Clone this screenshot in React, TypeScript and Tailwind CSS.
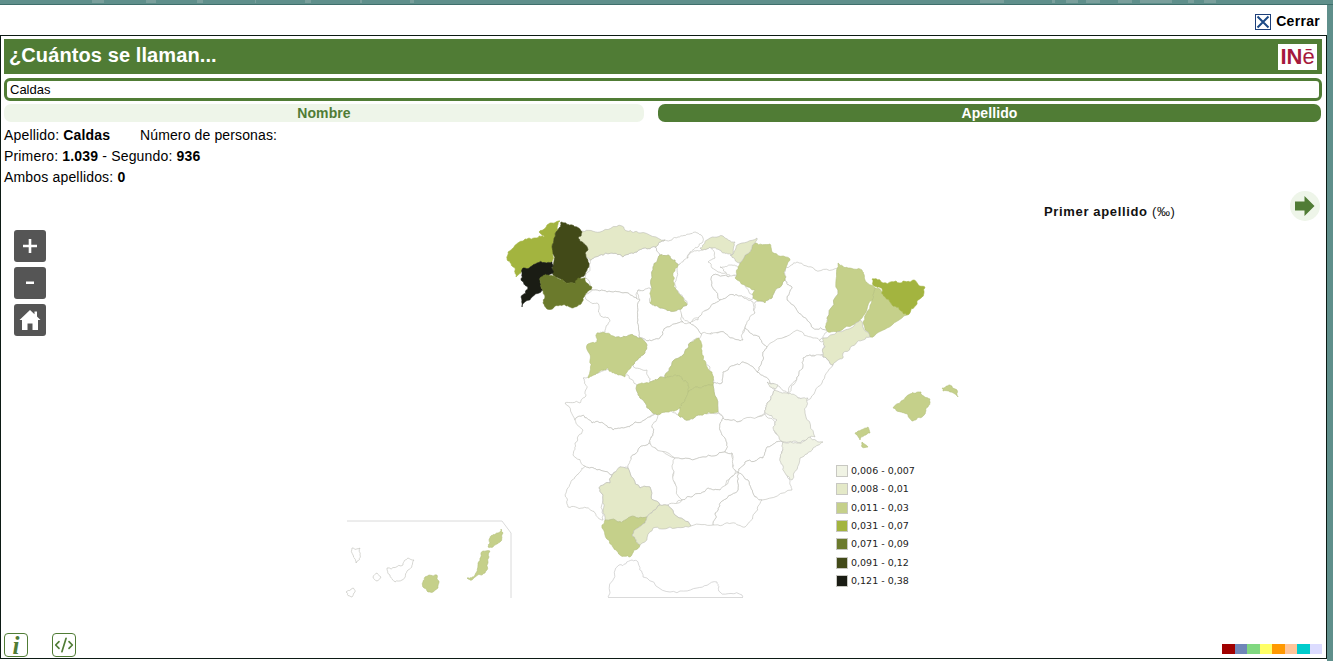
import React from "react";
import { CodeXml } from "lucide-react";

const C = { a: "#f0f3e4", b: "#e4e9c8", c: "#c5d08a", d: "#a3b43f", e: "#6b7a2c", f: "#424a18", g: "#1a1c14", w: "#ffffff" };

type P = [keyof typeof C, string];
const provinces: P[] = [
  ["w", "590,260 600,255 612,253 623,257 637,252 647,249 655,247 660,255 653,267 652,288 638,290 637,299 623,293 607,292 592,290 585,278 589,265"],
  ["w", "587,300 597,303 600,315 610,320 605,332 597,335 617,337 630,335 640,338 638,320 640,300 637,299 623,293 607,292 592,290 585,295"],
  ["w", "638,290 650,288 650,303 660,308 675,311 687,305 682,313 683,322 667,327 660,338 653,340 640,338 638,320 640,300"],
  ["w", "665,240 678,237 690,234 698,233 703,238 702,243 698,247 690,252 687,257 687,263 678,265 675,260 668,255 660,255 655,247"],
  ["w", "678,265 688,258 690,253 702,250 712,248 715,258 708,262 712,268 718,272 733,275 713,275 713,288 718,298 720,300 707,310 698,318 690,323 683,318 680,310 687,305 679,293 675,285 677,268"],
  ["w", "713,275 733,275 753,295 752,300 743,297 737,295 727,297 722,300 718,298 713,288"],
  ["w", "723,267 732,265 740,268 737,275 727,275 720,267"],
  ["w", "698,320 707,310 720,300 727,297 737,295 743,297 753,302 755,313 745,327 743,340 732,338 720,332 703,335 690,323"],
  ["w", "660,338 667,327 683,322 690,323 703,335 702,345 697,338 692,342 683,355 672,363 665,378 660,377 650,382 647,370 633,365 643,355 647,345 640,338 653,340"],
  ["w", "743,340 745,328 755,335 767,347 763,352 763,360 757,372 743,362 735,365 723,372 722,383 713,383 710,367 700,358 702,333 720,332 732,338"],
  ["w", "723,372 735,365 743,362 757,372 770,383 775,390 767,403 765,413 737,422 723,418 718,412 713,385 713,383 722,383"],
  ["w", "785,268 797,262 815,270 838,268 838,290 827,318 828,330 813,328 803,317 787,300 792,287 785,280"],
  ["w", "755,302 763,302 772,298 785,280 792,287 787,300 803,317 813,328 828,330 823,338 817,342 797,332 767,347 755,335 745,328 755,313"],
  ["w", "767,347 797,330 813,338 825,342 823,355 810,355 803,358 803,367 797,377 788,393 780,387 770,383 757,372 763,360 763,352"],
  ["w", "823,357 833,365 822,383 808,400 798,398 788,395 797,377 803,367 803,358 810,355 822,355"],
  ["w", "583,378 588,377 610,369 623,376 628,375 637,385 640,398 650,410 657,415 650,417 635,422 627,427 613,430 603,423 592,423 583,415 575,420 565,403 580,403 585,397 587,388"],
  ["w", "575,420 583,415 592,423 603,423 613,430 627,427 635,422 650,417 660,413 658,422 652,427 653,435 649,443 640,447 631,457 633,465 628,467 620,467 612,475 597,470 585,466 573,455 575,443 583,430"],
  ["w", "585,466 597,470 612,475 610,483 599,488 603,500 603,520 595,513 583,508 568,507 566,493 572,480 580,472"],
  ["w", "628,468 631,457 640,447 649,443 675,458 673,477 682,500 673,507 668,505 660,505 653,500 650,487 640,488"],
  ["w", "658,415 667,410 678,415 688,420 700,415 719,413 723,418 720,430 727,443 725,452 703,457 675,458 650,443 653,435 652,427"],
  ["w", "723,418 737,422 765,414 775,423 775,433 783,442 767,447 763,458 745,462 738,472 733,470 732,453 725,452 727,443 720,430"],
  ["w", "675,458 703,457 725,452 732,453 735,470 730,478 720,490 708,488 692,497 682,500 673,480"],
  ["w", "738,472 745,462 763,458 767,447 783,442 780,458 790,480 792,490 762,500 755,497 748,480"],
  ["w", "738,472 748,480 755,497 762,500 755,513 745,527 732,523 713,525 715,513 720,503 738,490"],
  ["w", "668,505 682,500 692,497 708,488 720,490 738,472 738,490 720,503 715,513 713,525 691,526 675,515"],
  ["b", "582,231 600,232 622,226 627,231 640,233 665,240 655,247 647,249 637,252 623,257 612,253 600,255 590,260 585,253 588,250 578,238"],
  ["d", "560,221 550,223 539,232 545,237 534,238 523,241 508,252 507,260 515,268 516,277 523,268 537,263 552,262 552,247 558,230"],
  ["f", "564,223 572,225 582,232 578,238 588,250 585,253 589,265 580,278 576,284 565,282 553,275 552,247 558,230 561,222"],
  ["g", "523,268 537,263 552,262 553,273 540,278 543,290 532,297 522,307 521,297 528,288 521,280"],
  ["e", "540,278 548,275 553,276 565,282 576,284 578,278 585,278 592,287 585,295 582,302 572,308 560,305 547,309 543,303 545,297 543,290"],
  ["c", "660,255 668,255 675,260 678,265 673,273 674,283 680,295 687,305 675,311 660,308 650,303 652,288 653,267"],
  ["c", "597,333 605,333 617,337 630,335 640,338 647,345 643,355 633,365 625,377 618,375 608,368 598,373 588,378 590,360 587,345 597,342"],
  ["c", "699,338 702,345 703,360 712,372 713,385 697,387 688,392 687,382 675,375 665,378 672,363 683,355 692,342"],
  ["c", "637,385 650,382 660,377 665,378 675,375 687,382 688,392 685,400 680,408 667,412 657,415 650,410 640,398"],
  ["c", "688,392 697,387 713,385 718,412 700,415 688,420 678,415 680,408 685,400"],
  ["c", "755,243 770,244 772,252 790,259 785,270 785,280 772,298 765,303 753,298 755,290 735,278 740,263"],
  ["b", "732,255 737,245 757,238 755,243 740,263 730,255"],
  ["b", "700,248 707,240 723,236 735,242 732,255 723,253 712,248 702,250"],
  ["c", "838,263 848,268 862,270 865,280 875,288 872,300 862,318 842,330 828,332 827,318 838,290"],
  ["c", "875,288 882,292 887,299 895,306 907,315 887,328 870,337 863,322 872,300"],
  ["d", "872,279 880,280 883,283 900,283 913,280 925,287 921,298 917,304 907,315 895,306 887,299 882,292 882,288 873,285"],
  ["b", "823,338 853,327 860,320 870,337 857,342 843,353 843,358 833,365 823,357 825,347"],
  ["a", "775,390 787,393 798,398 808,398 805,413 815,437 810,437 797,442 783,442 773,427 777,420 765,413 767,403"],
  ["a", "767,382 778,385 775,389 770,387"],
  ["a", "783,442 797,443 810,437 823,442 813,448 800,458 792,480 785,473 780,458 783,450"],
  ["b", "612,475 622,467 628,468 640,488 650,487 653,500 660,505 647,517 630,517 618,522 605,520 603,500 599,488 610,483"],
  ["c", "605,520 618,522 630,517 647,517 645,523 632,535 640,545 630,557 620,555 612,545 605,535 602,525"],
  ["b", "632,535 645,523 647,517 660,505 668,505 675,515 691,526 670,527 653,528 640,545"],
  ["c", "893,408 910,394 921,392 930,399 928,407 922,417 913,421 908,415 900,412"],
  ["c", "942,388 950,385 957,390 958,397 950,392 943,391"],
  ["c", "855,433 868,427 870,433 860,440"],
  ["c", "862,442 868,447 862,447"],
  ["c", "488,547 490,538 498,533 501,529 503,533 500,542 493,547"],
  ["c", "467,578 475,575 478,563 483,551 490,551 488,563 485,573 475,577 472,580"],
  ["c", "423,582 425,577 429,575 437,575 439,581 438,588 433,592 428,592 424,588"],
  ["w", "387,568 403,565 408,558 414,560 408,570 402,580 395,582 390,575"],
  ["w", "373,577 377,573 381,577 377,581"],
  ["w", "352,548 360,548 360,555 356,563 353,555"],
  ["w", "346,592 353,588 355,592 352,597"],
];

type Pt = [number, number];

function rnd(a: Pt, b: Pt) {
  const x = a[0] * 12.9898 + a[1] * 78.233 + b[0] * 37.719 + b[1] * 4.581;
  const s = Math.sin(x) * 43758.5453;
  return (s - Math.floor(s)) * 2 - 1;
}

function subdivide(a: Pt, b: Pt, depth: number, out: Pt[]) {
  const dx = b[0] - a[0];
  const dy = b[1] - a[1];
  const len = Math.hypot(dx, dy);
  if (depth === 0 || len < 2) return;
  const r = rnd(a, b);
  const amp = Math.min(1.6, len * 0.2) * r;
  const m: Pt = [(a[0] + b[0]) / 2 + (-dy / len) * amp, (a[1] + b[1]) / 2 + (dx / len) * amp];
  subdivide(a, m, depth - 1, out);
  out.push(m);
  subdivide(m, b, depth - 1, out);
}

// Edge wiggle: the same on both sides of a shared border, so neighbours stay joined.
function crinkle(src: string, close = true) {
  const pts = src.split(" ").map((p) => p.split(",").map(Number) as Pt);
  const out: Pt[] = [];
  const n = pts.length;
  for (let i = 0; i < (close ? n : n - 1); i++) {
    const a = pts[i];
    const b = pts[(i + 1) % n];
    out.push(a);
    const forward = a[0] < b[0] || (a[0] === b[0] && a[1] < b[1]);
    const seg: Pt[] = [];
    if (forward) subdivide(a, b, 3, seg);
    else {
      subdivide(b, a, 3, seg);
      seg.reverse();
    }
    out.push(...seg);
  }
  if (!close) out.push(pts[n - 1]);
  return out.map((p) => `${p[0].toFixed(2)},${p[1].toFixed(2)}`).join(" ");
}

const legend: [string, string][] = [
  ["bg-[#f0f3e4]", "0,006 - 0,007"],
  ["bg-[#e4e9c8]", "0,008 - 0,01"],
  ["bg-[#c5d08a]", "0,011 - 0,03"],
  ["bg-[#a3b43f]", "0,031 - 0,07"],
  ["bg-[#6b7a2c]", "0,071 - 0,09"],
  ["bg-[#424a18]", "0,091 - 0,12"],
  ["bg-[#1a1c14]", "0,121 - 0,38"],
];

const swatches = ["bg-[#a00000]", "bg-[#6f86b8]", "bg-[#80d880]", "bg-[#ffff66]", "bg-[#ff9900]", "bg-[#ffc599]", "bg-[#00cccc]", "bg-[#dcdcff]"];

function MapSvg() {
  return (
    <svg viewBox="1 188 1325 445" className="block h-[445px] w-[1325px]">
      <g strokeLinejoin="round">
        {provinces.map(([c, pts], i) => (
          <polygon
            key={i}
            points={crinkle(pts)}
            fill={C[c]}
            stroke={c === "w" || c === "a" || c === "b" ? "#bcbcb6" : c === "c" ? "#b4bf7c" : C[c]}
            strokeWidth="0.6"
          />
        ))}
        <polyline points={crinkle("608,597 619,565 632,560 638,562 643,577 670,592 697,588 717,582 720,592 742,595 743,597", false)} fill="none" stroke="#c8c8c8" strokeWidth="0.7" />
      </g>
      <polyline points="347,521 502,521 511,533 511,598" fill="none" stroke="#dadada" strokeWidth="1" />
      <line x1="608" y1="597.5" x2="743" y2="597.5" stroke="#dadada" strokeWidth="1" />
    </svg>
  );
}

export default function App() {
  return (
    <div className="relative flex h-[661px] w-[1333px] flex-col overflow-hidden bg-[#5f8f8b] font-['Liberation_Sans',Arial,sans-serif] text-black">
      <svg className="block h-[5px] w-[1333px] shrink-0" viewBox="0 0 1333 5">
        <rect width="1333" height="5" fill="#5f8f8b" />
        <rect y="4" width="1333" height="1" fill="#3f6f6c" />
        <g fill="#7a9f9c">
          <rect x="92" width="12" height="3" />
          <rect x="146" width="10" height="3" />
          <rect x="197" width="6" height="3" />
          <rect x="255" width="1" height="3" />
          <rect x="305" width="6" height="3" />
          <rect x="360" width="2" height="3" />
          <rect x="410" width="4" height="3" />
          <rect x="980" width="24" height="3" />
          <rect x="1052" width="3" height="3" />
          <rect x="1066" width="12" height="3" />
          <rect x="1086" width="14" height="3" />
          <rect x="1118" width="14" height="3" />
          <rect x="1140" width="32" height="3" />
          <rect x="1188" width="6" height="3" />
          <rect x="1204" width="12" height="3" />
        </g>
      </svg>
      <div className="flex h-[656px] w-[1333px] shrink-0 items-start">
        <div className="h-[656px] w-[1327px] bg-white">
          <div className="flex h-[30px] items-center justify-end pr-[7px] pt-[2px]">
            <svg width="16" height="16" viewBox="0 0 16 16" className="mr-[5px] mt-[1px]">
              <rect x="0.5" y="0.5" width="15" height="15" fill="#fff" stroke="#1d3f7a" />
              <path d="M2.5 2.5 L13.5 13.5 M13.5 2.5 L2.5 13.5" stroke="#1d4a86" strokeWidth="2" />
            </svg>
            <span className="text-[14px] font-bold tracking-[0.3px]">Cerrar</span>
          </div>
          <div className="h-[624px] border border-[#0c1a14] pl-[3px] pr-[4px] pt-[3px]">
            <div className="flex h-[35px] items-center justify-between bg-[#507c35] pb-[3px] pl-[5px] pr-[5px]">
              <span className="text-[20px] font-bold tracking-[0.1px] text-white">¿Cuántos se llaman...</span>
              <div className="mt-[3px] flex h-[26px] w-[39px] items-center justify-center bg-white pt-[1px] text-[22px] leading-none text-[#a5193c]">
                <span className="font-bold">IN</span>
                <span>ē</span>
              </div>
            </div>
            <div className="mt-[4px] flex h-[23px] items-center rounded-[6px] border-[3px] border-[#507c35] pl-[3px] text-[13px]">Caldas</div>
            <div className="mt-[3px] flex h-[18px] gap-[14px] text-[14px] font-bold tracking-[0.1px]">
              <div className="flex w-[640px] items-center justify-center rounded-[7px] bg-[#eef5e9] text-[#507c35]">Nombre</div>
              <div className="flex w-[663px] items-center justify-center rounded-[7px] bg-[#507c35] text-white">Apellido</div>
            </div>
            <div className="mt-[3px] h-[63px] text-[14px] leading-[21px] tracking-[0.17px]">
              <div className="flex">
                <span className="w-[136px]">Apellido: <b>Caldas</b></span>
                <span className="tracking-[0.13px]">Número de personas:</span>
              </div>
              <div>Primero: <b>1.039</b> - Segundo: <b>936</b></div>
              <div>Ambos apellidos: <b>0</b></div>
            </div>
            <div className="relative -ml-[3px] -mr-[4px] h-[445px]">
              <MapSvg />
              <div className="absolute left-[13px] top-[42px] flex flex-col gap-[5px]">
                <div className="flex h-[32px] w-[32px] items-center justify-center rounded-[3px] bg-[#555555]">
                  <svg width="16" height="16" viewBox="0 0 16 16"><path d="M8 1v14M1 8h14" stroke="#fff" strokeWidth="2.6" /></svg>
                </div>
                <div className="flex h-[32px] w-[32px] items-center justify-center rounded-[3px] bg-[#555555]">
                  <svg width="8" height="4" viewBox="0 0 8 4"><rect width="8" height="2.5" y="0.5" fill="#fff" /></svg>
                </div>
                <div className="flex h-[32px] w-[32px] items-center justify-center rounded-[3px] bg-[#555555]">
                  <svg width="22" height="22" viewBox="0 0 22 22"><path d="M11 1 L0.5 11 L3 11 L3 21 L8.5 21 L8.5 14.5 L13.5 14.5 L13.5 21 L19 21 L19 11 L21.5 11 L18 7.6 L18 2.5 L15.5 2.5 L15.5 5.2 Z" fill="#fff" /></svg>
                </div>
              </div>
              <div className="absolute left-[1043px] top-[14px] text-[13px] font-bold tracking-[0.65px] text-[#111]">
                Primer apellido <span className="font-normal">(‰)</span>
              </div>
              <div className="absolute left-[1289px] top-[3px] flex h-[30px] w-[30px] items-center justify-center rounded-full bg-[#eef5e9]">
                <svg width="20" height="20" viewBox="0 0 20 20"><path d="M0 5.5h9.5V0l10 10-10 10v-5.5H0z" fill="#507c35" /></svg>
              </div>
              <div className="absolute left-[835px] top-[274px] flex flex-col">
                {legend.map(([bg, t]) => (
                  <div key={t} className="flex h-[18.33px] items-center gap-[3px] font-['DejaVu_Sans',sans-serif] text-[9.5px] text-[#222]">
                    <span className={`h-[12px] w-[12px] border border-[#c8c8c2] ${bg}`} />
                    <span>{t}</span>
                  </div>
                ))}
              </div>
            </div>
            <div className="flex h-[24px] items-end justify-between">
              <div className="flex gap-[24px]">
                <div className="flex h-[24px] w-[24px] items-center justify-center rounded-[4px] border-[1.5px] border-[#507c35] font-['Liberation_Serif',serif] text-[25px] font-bold italic leading-none text-[#507c35]">i</div>
                <div className="flex h-[24px] w-[24px] items-center justify-center rounded-[4px] border-[1.5px] border-[#507c35] text-[#507c35]">
                  <CodeXml size={20} strokeWidth={2} />
                </div>
              </div>
              <div className="mb-[3px] flex h-[10px] w-[100px]">
                {swatches.map((s) => (
                  <span key={s} className={`h-[10px] w-[12.5px] ${s}`} />
                ))}
              </div>
            </div>
          </div>
        </div>
      </div>
    </div>
  );
}
